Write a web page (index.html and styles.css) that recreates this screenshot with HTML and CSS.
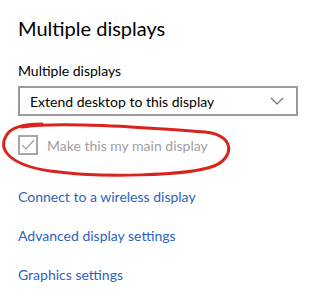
FILE: index.html
```html
<!DOCTYPE html>
<html lang="en">
<head>
    <meta charset="UTF-8">
    <title>Multiple displays</title>
    <link rel="stylesheet" href="styles.css">
</head>
<body>
    <div class="panel">
        <h2 class="title">Multiple displays</h2>
        <div class="field-label">Multiple displays</div>
        <div class="select">
            <span>Extend desktop to this display</span>
            <svg class="chevron" width="14" height="8" viewBox="0 0 14 8">
                <path d="M1 1 L7 7 L13 1" fill="none" stroke="#707070" stroke-width="1.2"/>
            </svg>
        </div>

        <div class="check-row">
            <span class="checkbox">
                <svg width="16" height="16" viewBox="0 0 16 16">
                    <path d="M2 8 L6 12 L14 3" fill="none" stroke="#a6a6a6" stroke-width="1.4"/>
                </svg>
            </span>
            <span class="check-text">Make this my main display</span>
            <!-- hand drawn circle over the checkbox -->
            <svg class="scribble" width="240" height="64" viewBox="0 0 240 64">
                <path d="M22 7 C60 1, 150 8, 205 12 C236 15, 234 38, 214 46 C188 56, 100 58, 50 51 C10 45, -2 30, 6 16 C10 8, 22 4, 42 4"
                      fill="none" stroke="#d9241e" stroke-width="3" stroke-linecap="round"/>
            </svg>
        </div>

        <a class="link" href="#">Connect to a wireless display</a>
        <a class="link" href="#">Advanced display settings</a>
        <a class="link" href="#">Graphics settings</a>
    </div>
</body>
</html>
```

FILE: styles.css
```css
body {
    margin: 0;
    background-color: white;
    font-family: Lato, "Noto Sans", sans-serif;
    color: #000;
}
.panel {
    padding: 14px 18px 0 18px;
    display: flex;
    flex-direction: column;
    align-items: flex-start;
}
.title {
    margin: 0;
    font-size: 20px;
    font-weight: 400;
    line-height: 28px;
}
.field-label {
    margin-top: 19px;
    font-size: 14px;
    line-height: 20px;
}
.select {
    margin-top: 5px;
    box-sizing: border-box;
    width: 280px;
    height: 30px;
    border: 2px solid #9a9a9a;
    display: flex;
    align-items: center;
    justify-content: space-between;
    padding: 0 10px;
    font-size: 14px;
}
.chevron {
    margin-right: 2px;
}
.check-row {
    position: relative;
    margin-top: 19px;
    display: flex;
    align-items: center;
    gap: 9px;
}
.checkbox {
    box-sizing: border-box;
    width: 20px;
    height: 20px;
    border: 2px solid #a6a6a6;
    display: flex;
    align-items: center;
    justify-content: center;
}
.check-text {
    font-size: 14px;
    color: #a0a0a0;
}
.scribble {
    position: absolute;
    left: -18px;
    top: -15px;
}
.link {
    margin-top: 19px;
    font-size: 14px;
    line-height: 20px;
    color: #2d62c0;
    text-decoration: none;
}
.check-row + .link {
    margin-top: 32px;
}
```
